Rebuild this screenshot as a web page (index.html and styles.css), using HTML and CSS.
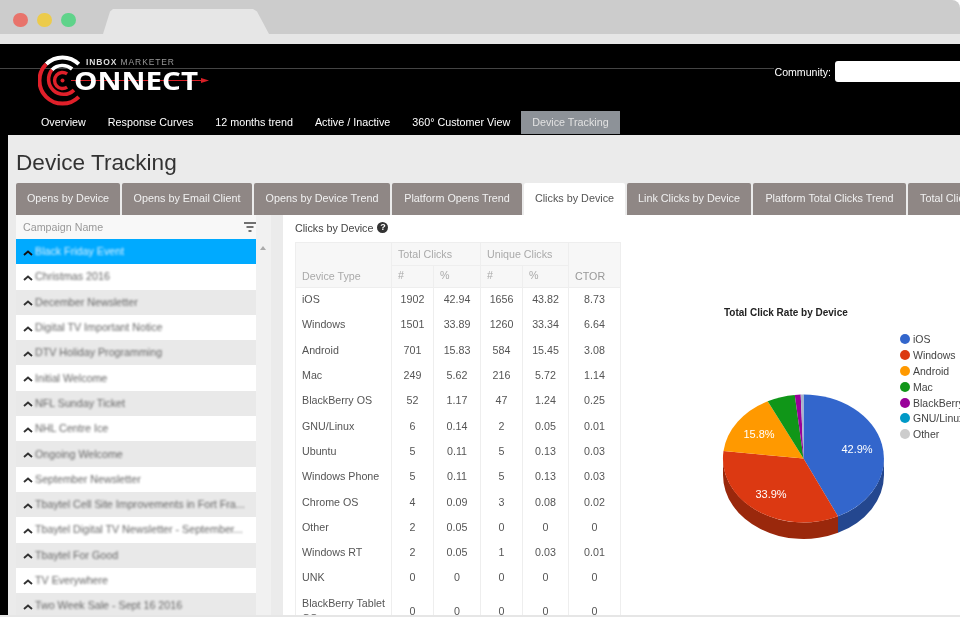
FILE: index.html
```html
<!DOCTYPE html>
<html lang="en">
<head>
<meta charset="utf-8">
<title>Device Tracking</title>
<link rel="stylesheet" href="styles.css">
</head>
<body>
<div class="stage">
  <div class="chrome">
    <div class="dots"><span class="dot red"></span><span class="dot yellow"></span><span class="dot green"></span></div>
    <div class="browser-tab"></div>
  </div>
  <div class="chrome-bar"></div>
  <header class="site-header">
    <div class="header-top">
      <svg class="logo" viewBox="0 0 180 56" width="180" height="56" aria-label="Inbox Marketer Connect">
        <path d="M33 28.5H164" stroke="#d81f26" stroke-width="1.2"/>
        <path d="M171 28.5l-8-2.5v5z" fill="#d81f26"/>
        <g fill="none">
          <path d="M8.2 12.2A23 23 0 0 1 40.8 12.2" stroke="#fff" stroke-width="4"/>
          <path d="M8.2 12.2A23 23 0 0 0 40.8 44.8" stroke="#e0202a" stroke-width="4"/>
          <path d="M13.9 17.9A15 15 0 0 1 34.1 17" stroke="#fff" stroke-width="3.6"/>
          <path d="M13.9 17.9A15 15 0 0 0 36 38.1" stroke="#e0202a" stroke-width="3.6"/>
          <path d="M29.1 21.9A8 8 0 1 0 29.1 35.1" stroke="#e0202a" stroke-width="3.4"/>
        </g>
        <circle cx="24.5" cy="28.5" r="2" fill="#e0202a"/>
        <text class="logo-small" x="48" y="13" textLength="88"><tspan class="logo-b">INBOX</tspan> MARKETER</text>
        <text class="logo-big" x="36" y="38" textLength="124" lengthAdjust="spacingAndGlyphs">ONNECT</text>
      </svg>
      <div class="community"><label class="community-label" for="c">Community:</label><input id="c" class="community-input" type="text"></div>
    </div>
    <nav class="main-nav">
      <a class="nav-item">Overview</a>
      <a class="nav-item">Response Curves</a>
      <a class="nav-item">12 months trend</a>
      <a class="nav-item">Active / Inactive</a>
      <a class="nav-item">360° Customer View</a>
      <a class="nav-item active">Device Tracking</a>
    </nav>
  </header>
  <div class="shell">
  <main class="page">
    <h1 class="page-title">Device Tracking</h1>
    <div class="tabs">
      <a class="tab t1">Opens by Device</a>
      <a class="tab t2">Opens by Email Client</a>
      <a class="tab t3">Opens by Device Trend</a>
      <a class="tab t4">Platform Opens Trend</a>
      <a class="tab t5 active">Clicks by Device</a>
      <a class="tab t6">Link Clicks by Device</a>
      <a class="tab t7">Platform Total Clicks Trend</a>
      <a class="tab t8">Total Clicks Trend</a>
    </div>
    <div class="panels">
      <aside class="side">
        <div class="list">
          <div class="list-head"><span>Campaign Name</span>
            <svg class="filter" viewBox="0 0 12 10" width="12" height="10"><path d="M0 1h12M2.5 5h7M4.5 9h3" stroke="#444" stroke-width="1.6"/></svg>
          </div>
          <div class="row selected"><svg class="chev" viewBox="0 0 10 6"><path d="M1 5l4-3.5L9 5" /></svg><span class="name">Black Friday Event</span></div>
          <div class="row"><svg class="chev" viewBox="0 0 10 6"><path d="M1 5l4-3.5L9 5" /></svg><span class="name">Christmas 2016</span></div>
          <div class="row"><svg class="chev" viewBox="0 0 10 6"><path d="M1 5l4-3.5L9 5" /></svg><span class="name">December Newsletter</span></div>
          <div class="row"><svg class="chev" viewBox="0 0 10 6"><path d="M1 5l4-3.5L9 5" /></svg><span class="name">Digital TV Important Notice</span></div>
          <div class="row"><svg class="chev" viewBox="0 0 10 6"><path d="M1 5l4-3.5L9 5" /></svg><span class="name">DTV Holiday Programming</span></div>
          <div class="row"><svg class="chev" viewBox="0 0 10 6"><path d="M1 5l4-3.5L9 5" /></svg><span class="name">Initial Welcome</span></div>
          <div class="row"><svg class="chev" viewBox="0 0 10 6"><path d="M1 5l4-3.5L9 5" /></svg><span class="name">NFL Sunday Ticket</span></div>
          <div class="row"><svg class="chev" viewBox="0 0 10 6"><path d="M1 5l4-3.5L9 5" /></svg><span class="name">NHL Centre Ice</span></div>
          <div class="row"><svg class="chev" viewBox="0 0 10 6"><path d="M1 5l4-3.5L9 5" /></svg><span class="name">Ongoing Welcome</span></div>
          <div class="row"><svg class="chev" viewBox="0 0 10 6"><path d="M1 5l4-3.5L9 5" /></svg><span class="name">September Newsletter</span></div>
          <div class="row"><svg class="chev" viewBox="0 0 10 6"><path d="M1 5l4-3.5L9 5" /></svg><span class="name">Tbaytel Cell Site Improvements in Fort Fra...</span></div>
          <div class="row"><svg class="chev" viewBox="0 0 10 6"><path d="M1 5l4-3.5L9 5" /></svg><span class="name">Tbaytel Digital TV Newsletter - September...</span></div>
          <div class="row"><svg class="chev" viewBox="0 0 10 6"><path d="M1 5l4-3.5L9 5" /></svg><span class="name">Tbaytel For Good</span></div>
          <div class="row"><svg class="chev" viewBox="0 0 10 6"><path d="M1 5l4-3.5L9 5" /></svg><span class="name">TV Everywhere</span></div>
          <div class="row"><svg class="chev" viewBox="0 0 10 6"><path d="M1 5l4-3.5L9 5" /></svg><span class="name">Two Week Sale - Sept 16 2016</span></div>
        </div>
        <div class="scroll"><span class="scroll-up"></span></div>
      </aside>
      <section class="content">
        <div class="table-col">
          <div class="table-title">Clicks by Device <span class="help">?</span></div>
          <table class="data">
            <colgroup><col class="c0"><col class="c1"><col class="c2"><col class="c3"><col class="c4"><col class="c5"></colgroup>
            <thead>
              <tr class="h1"><th rowspan="2" class="dev">Device Type</th><th colspan="2">Total Clicks</th><th colspan="2">Unique Clicks</th><th rowspan="2" class="ctor">CTOR</th></tr>
              <tr class="h2"><th>#</th><th>%</th><th>#</th><th>%</th></tr>
            </thead>
            <tbody>
              <tr><td>iOS</td><td>1902</td><td>42.94</td><td>1656</td><td>43.82</td><td>8.73</td></tr>
              <tr><td>Windows</td><td>1501</td><td>33.89</td><td>1260</td><td>33.34</td><td>6.64</td></tr>
              <tr><td>Android</td><td>701</td><td>15.83</td><td>584</td><td>15.45</td><td>3.08</td></tr>
              <tr><td>Mac</td><td>249</td><td>5.62</td><td>216</td><td>5.72</td><td>1.14</td></tr>
              <tr><td>BlackBerry OS</td><td>52</td><td>1.17</td><td>47</td><td>1.24</td><td>0.25</td></tr>
              <tr><td>GNU/Linux</td><td>6</td><td>0.14</td><td>2</td><td>0.05</td><td>0.01</td></tr>
              <tr><td>Ubuntu</td><td>5</td><td>0.11</td><td>5</td><td>0.13</td><td>0.03</td></tr>
              <tr><td>Windows Phone</td><td>5</td><td>0.11</td><td>5</td><td>0.13</td><td>0.03</td></tr>
              <tr><td>Chrome OS</td><td>4</td><td>0.09</td><td>3</td><td>0.08</td><td>0.02</td></tr>
              <tr><td>Other</td><td>2</td><td>0.05</td><td>0</td><td>0</td><td>0</td></tr>
              <tr><td>Windows RT</td><td>2</td><td>0.05</td><td>1</td><td>0.03</td><td>0.01</td></tr>
              <tr><td>UNK</td><td>0</td><td>0</td><td>0</td><td>0</td><td>0</td></tr>
              <tr class="tall"><td>BlackBerry Tablet OS</td><td>0</td><td>0</td><td>0</td><td>0</td><td>0</td></tr>
            </tbody>
          </table>
        </div>
        <div class="chart-col">
          <svg class="chart" viewBox="700 300 260 250" width="260" height="250" role="img" aria-label="Total Click Rate by Device">
            <text class="chart-title" x="724" y="316">Total Click Rate by Device</text>
            <path d="M884 458.5A80.5 64 0 0 1 838 516.3V532.8A80.5 64 0 0 0 884 475Z" fill="#24478f"/>
            <path d="M838 516.3A80.5 64 0 0 1 723 458.5V475A80.5 64 0 0 0 838 532.8Z" fill="#9a280c"/>
            <path d="M803.5 458.5L803.5 394.5A80.5 64 0 0 1 838 516.3Z" fill="#3366cc"/>
            <path d="M803.5 458.5L838 516.3A80.5 64 0 0 1 723.5 451.1Z" fill="#dc3912"/>
            <path d="M803.5 458.5L723.5 451.1A80.5 64 0 0 1 767.7 401.2Z" fill="#ff9900"/>
            <path d="M803.5 458.5L767.7 401.2A80.5 64 0 0 1 794.8 394.9Z" fill="#109618"/>
            <path d="M803.5 458.5L794.8 394.9A80.5 64 0 0 1 800.7 394.5Z" fill="#990099"/>
            <path d="M803.5 458.5L800.7 394.5A80.5 64 0 0 1 803.5 394.5Z" fill="#aab4c8"/>
            <text class="pie-label" x="857" y="453">42.9%</text>
            <text class="pie-label" x="771" y="498">33.9%</text>
            <text class="pie-label" x="759" y="438">15.8%</text>
            <g class="legend">
              <circle cx="905" cy="339" r="5" fill="#3366cc"/><text x="913" y="343">iOS</text>
              <circle cx="905" cy="355" r="5" fill="#dc3912"/><text x="913" y="359">Windows</text>
              <circle cx="905" cy="371" r="5" fill="#ff9900"/><text x="913" y="375">Android</text>
              <circle cx="905" cy="387" r="5" fill="#109618"/><text x="913" y="391">Mac</text>
              <circle cx="905" cy="403" r="5" fill="#990099"/><text x="913" y="407">BlackBerry OS</text>
              <circle cx="905" cy="418" r="5" fill="#0099c6"/><text x="913" y="422">GNU/Linux</text>
              <circle cx="905" cy="434" r="5" fill="#ccc"/><text x="913" y="438">Other</text>
            </g>
          </svg>
        </div>
      </section>
    </div>
  </main>
  </div>
  <div class="bottom-edge"></div>
</div>
</body>
</html>
```
FILE: styles.css
```css
* { box-sizing: border-box; }
html, body { margin: 0; height: 100%; background: #fff; overflow: hidden; }
body { font-family: "Liberation Sans", Arial, sans-serif; }
.stage { width: 960px; height: 617px; overflow: hidden; background: #fff; filter: blur(0.35px); display: flex; flex-direction: column; }

.chrome { flex: none; height: 34px; background: #ccc; display: flex; align-items: center; position: relative; border-top-right-radius: 8px; }
.dots { display: flex; gap: 9.5px; padding-left: 13px; margin-top: 6px; }
.dot { width: 14.5px; height: 14.5px; border-radius: 50%; }
.dot.red { background: #e8736b; }
.dot.yellow { background: #eccb4b; }
.dot.green { background: #5fd38a; }
.browser-tab { position: absolute; left: 103px; top: 9px; width: 166px; height: 25px; background: #e6e6e6; clip-path: polygon(0 100%, 7px 10%, 10px 0, 150px 0, 154px 10%, 166px 100%); border-radius: 4px 4px 0 0; }
.chrome-bar { flex: none; height: 10px; background: #e6e6e6; }

.site-header { flex: none; height: 91px; background: #000; color: #fff; overflow: hidden; }
.header-top { height: 67px; position: relative; display: flex; align-items: flex-start; padding-left: 38px; }
.header-top::after { content: ""; position: absolute; left: 0; right: 0; top: 24px; height: 1px; background: #444; }
.logo { flex: none; margin-top: 8px; position: relative; z-index: 1; }
.logo-small { font: 8.5px "Liberation Sans", sans-serif; fill: #999; }
.logo-b { font-weight: 700; fill: #ddd; }
.logo-big { font: 700 25.5px "Open Sans", "Liberation Sans", sans-serif; fill: #fff; }
.community { flex: none; margin-left: auto; margin-top: 17px; margin-right: -10px; display: flex; align-items: center; gap: 4px; position: relative; z-index: 1; background: #000; }
.community-label { font-size: 10.6px; color: #fff; }
.community-input { width: 135px; height: 21px; border: 0; border-radius: 3px; background: #fff; padding: 0; }

.main-nav { display: flex; padding-left: 30px; height: 24px; }
.nav-item { padding: 0 11px; font-size: 10.75px; line-height: 23px; color: #fff; white-space: nowrap; }
.nav-item.active { background: #8d9298; color: #e2e2e2; height: 23px; }

.shell { flex: 1; min-height: 0; background: #000; padding-left: 8px; }
.page { height: 100%; background: #ebebeb; padding-left: 8px; overflow: hidden; }
.page-title { margin: 0; height: 48px; padding-top: 14px; font-size: 22.6px; line-height: 28px; font-weight: 400; color: #333; white-space: nowrap; }
.tabs { display: flex; gap: 2px; height: 32px; white-space: nowrap; overflow: hidden; }
.tab { flex: none; background: #8f8785; color: #f1f1f1; font-size: 10.8px; line-height: 31px; text-align: center; border-radius: 2px 2px 0 0; }
.tab.active { background: #fff; color: #555; }
.t1 { width: 104px; } .t2 { width: 130px; } .t3 { width: 136px; } .t4 { width: 130px; }
.t5 { width: 101px; } .t6 { width: 124px; } .t7 { width: 153px; }
.t8 { width: 120px; text-align: left; padding-left: 12px; }

.panels { display: flex; height: 400px; }
.side { flex: none; width: 255px; display: flex; background: #f1f1f1; }
.list { width: 240px; flex: none; }
.list-head { height: 24px; background: #f8f8f8; display: flex; justify-content: space-between; align-items: center; padding: 0 0 0 7px; font-size: 10.7px; color: #999; }
.row { height: 25.3px; display: flex; align-items: center; gap: 2px; padding: 0 0 1px 7px; font-size: 10.7px; color: #666; white-space: nowrap; }
.row:nth-child(odd) { background: #fff; }
.row:nth-child(even) { background: #e9e9e9; }
.row.selected { background: #00aaff; color: #d9f0ff; }
.chev { width: 10px; height: 6px; fill: none; stroke: #333; stroke-width: 1.9; margin-top: 3px; flex: none; }
.selected .chev { stroke: #111; }
.name { filter: blur(1px); display: block; overflow: hidden; }
.scroll { flex: 1; position: relative; }
.scroll-up { position: absolute; left: 4px; top: 31px; border: 3px solid transparent; border-top: 0; border-bottom: 4px solid #aaa; }

.content { margin-left: 12px; flex: 1; background: #fff; display: flex; padding-left: 12px; height: 400px; overflow: hidden; min-width: 0; }
.table-col { width: 326px; flex: none; }
.table-title { height: 27px; padding-top: 7px; font-size: 10.7px; line-height: 13px; color: #444; }
.help { display: inline-block; width: 11px; height: 11px; border-radius: 50%; background: #333; color: #fff; font-size: 9px; line-height: 11px; text-align: center; font-weight: 700; vertical-align: top; margin-left: 1px; }

.data { border-collapse: collapse; table-layout: fixed; width: 325px; font-size: 10.7px; color: #555; }
.c0 { width: 96px; } .c1 { width: 42px; } .c2 { width: 47px; } .c3 { width: 42px; } .c4 { width: 46px; } .c5 { width: 52px; }
.data th { font-weight: 400; color: #aaa; background: #f7f7f7; border: 1px solid #eee; text-align: left; padding: 0 6px; }
.data .h1 th { height: 23px; }
.data .h2 th { height: 22px; padding-bottom: 3px; }
.data th.dev, .data th.ctor { vertical-align: bottom; padding-bottom: 5px; }
.data th.ctor { color: #999; }
.data td { height: 25.3px; text-align: center; border-left: 1px solid #eee; border-right: 1px solid #eee; padding: 0 1px 2px; }
.data td:first-child { text-align: left; padding: 0 6px 2px; color: #555; }
.data .tall td { height: 40px; padding-bottom: 0; }
.data .tall td:first-child { line-height: 15px; white-space: normal; padding-bottom: 0; }

.chart-col { flex: none; width: 340px; padding: 85px 0 0 79px; }
.chart { display: block; overflow: hidden; }
.chart-title { font: 700 10px "Liberation Sans", sans-serif; fill: #222; }
.pie-label { font: 11px "Liberation Sans", sans-serif; fill: #fff; text-anchor: middle; }
.legend text { font: 10.5px "Liberation Sans", sans-serif; fill: #444; }

.bottom-edge { flex: none; height: 2px; background: #e6e6e6; }
```
